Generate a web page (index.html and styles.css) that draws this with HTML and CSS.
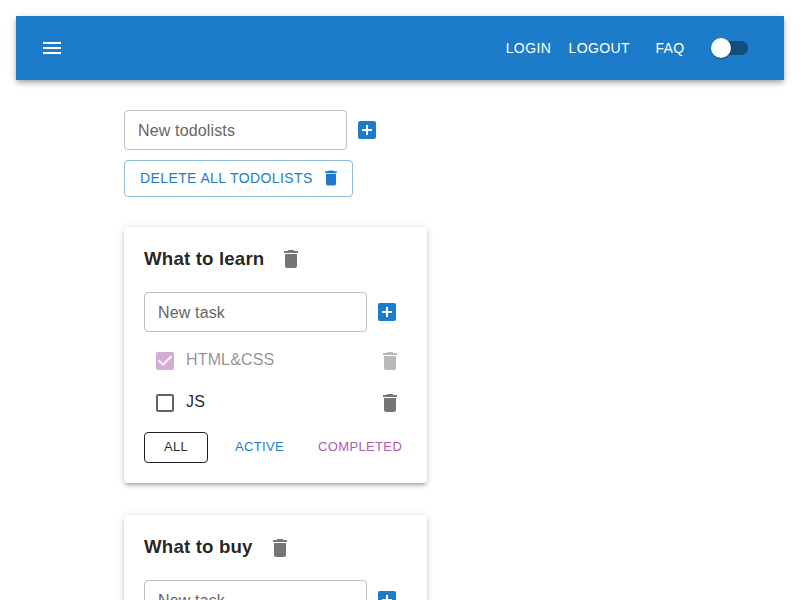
FILE: index.html
```
<!DOCTYPE html>
<html lang="en">
<head>
<meta charset="utf-8">
<title>Todolists</title>
<link rel="stylesheet" href="styles.css">
</head>
<body>
<svg class="sprite" aria-hidden="true">
  <symbol id="menu" viewBox="0 0 24 24"><path d="M3 18h18v-2H3v2zm0-5h18v-2H3v2zm0-7v2h18V6H3z"/></symbol>
  <symbol id="add" viewBox="0 0 24 24"><path d="M19 3H5c-1.11 0-2 .9-2 2v14c0 1.1.89 2 2 2h14c1.1 0 2-.9 2-2V5c0-1.1-.9-2-2-2zm-2 10h-4v4h-2v-4H7v-2h4V7h2v4h4v2z"/></symbol>
  <symbol id="delete" viewBox="0 0 24 24"><path d="M6 19c0 1.1.9 2 2 2h8c1.1 0 2-.9 2-2V7H6v12zM19 4h-3.5l-1-1h-5l-1 1H5v2h14V4z"/></symbol>
  <symbol id="checked" viewBox="0 0 24 24"><path d="M19 3H5c-1.11 0-2 .9-2 2v14c0 1.1.89 2 2 2h14c1.11 0 2-.9 2-2V5c0-1.1-.89-2-2-2zm-9 14l-5-5 1.41-1.41L10 14.17l7.59-7.59L19 8l-9 9z"/></symbol>
  <symbol id="unchecked" viewBox="0 0 24 24"><path d="M19 5v14H5V5h14m0-2H5c-1.1 0-2 .9-2 2v14c0 1.1.9 2 2 2h14c1.1 0 2-.9 2-2V5c0-1.1-.9-2-2-2z"/></symbol>
</svg>
<header class="bar">
  <button class="icon-btn menu-btn" aria-label="menu"><svg class="icon"><use href="#menu"/></svg></button>
  <nav class="nav">
    <button class="btn">Login</button>
    <button class="btn">Logout</button>
    <button class="btn">FAQ</button>
    <span class="switch"><span class="track"></span><span class="thumb"></span></span>
  </nav>
</header>
<main class="content">
  <div class="add-form">
    <input class="field" placeholder="New todolists">
    <button class="icon-btn primary" aria-label="add"><svg class="icon"><use href="#add"/></svg></button>
  </div>
  <button class="btn delete-all">Delete all todolists<svg class="icon small"><use href="#delete"/></svg></button>
  <section class="card">
    <h3 class="title"><span>What to learn</span><button class="icon-btn" aria-label="delete"><svg class="icon"><use href="#delete"/></svg></button></h3>
    <div class="add-form">
      <input class="field" placeholder="New task">
      <button class="icon-btn primary" aria-label="add"><svg class="icon"><use href="#add"/></svg></button>
    </div>
    <ul class="tasks">
      <li class="task done">
        <span class="check"><svg class="icon"><use href="#checked"/></svg></span><span class="label">HTML&amp;CSS</span>
        <button class="icon-btn" aria-label="delete"><svg class="icon"><use href="#delete"/></svg></button>
      </li>
      <li class="task">
        <span class="check"><svg class="icon"><use href="#unchecked"/></svg></span><span class="label">JS</span>
        <button class="icon-btn" aria-label="delete"><svg class="icon"><use href="#delete"/></svg></button>
      </li>
    </ul>
    <div class="filters">
      <button class="btn filter current">All</button>
      <button class="btn filter active">Active</button>
      <button class="btn filter completed">Completed</button>
    </div>
  </section>
  <section class="card">
    <h3 class="title"><span>What to buy</span><button class="icon-btn" aria-label="delete"><svg class="icon"><use href="#delete"/></svg></button></h3>
    <div class="add-form">
      <input class="field" placeholder="New task">
      <button class="icon-btn primary" aria-label="add"><svg class="icon"><use href="#add"/></svg></button>
    </div>
  </section>
</main>
</body>
</html>
```
FILE: styles.css
```
* { box-sizing: border-box; }
html, body { height: 100%; }
body {
  margin: 0;
  padding: 16px;
  overflow: hidden;
  background: #fff;
  color: rgba(0, 0, 0, .87);
  font: 16px/24px "Liberation Sans", Arial, sans-serif;
  letter-spacing: .15px;
}
button, input { font: inherit; letter-spacing: inherit; margin: 0; }
.sprite { display: none; }
.icon { display: block; flex: none; width: 24px; height: 24px; fill: currentColor; }
.icon.small { width: 20px; height: 20px; }
.icon-btn {
  display: flex;
  flex: none;
  padding: 8px;
  border: 0;
  background: none;
  color: rgba(0, 0, 0, .54);
}
.btn {
  min-width: 64px;
  padding: 6px 8px;
  border: 0;
  border-radius: 4px;
  background: none;
  color: inherit;
  font-size: 14px;
  line-height: 24.5px;
  letter-spacing: .4px;
  text-transform: uppercase;
  white-space: nowrap;
}
.primary { color: #1d7cc9; }

.bar {
  display: flex;
  align-items: center;
  justify-content: space-between;
  height: 64px;
  padding: 0 24px 0 16px;
  background: #1d7cc9;
  color: #fff;
  box-shadow: 0 2px 4px -1px rgba(0, 0, 0, .2), 0 4px 5px rgba(0, 0, 0, .14), 0 1px 10px rgba(0, 0, 0, .12);
}
.menu-btn { color: #fff; }
.nav { display: flex; align-items: center; }
.switch { position: relative; width: 58px; height: 38px; padding: 12px; }
.track { display: block; height: 14px; border-radius: 7px; background: #000; opacity: .38; }
.thumb {
  position: absolute;
  left: 9px;
  top: 9px;
  width: 20px;
  height: 20px;
  border-radius: 50%;
  background: #fff;
  box-shadow: 0 2px 1px -1px rgba(0, 0, 0, .2), 0 1px 1px rgba(0, 0, 0, .14), 0 1px 3px rgba(0, 0, 0, .12);
}

.content { width: 303px; margin: 30px 0 0 108px; }
.add-form { display: flex; }
.field {
  width: 223px;
  height: 40px;
  padding: 2px 13px 0;
  border: 1px solid rgba(0, 0, 0, .25);
  border-radius: 4px;
  background: none;
  color: inherit;
}
.field::placeholder { color: #666; opacity: 1; }
.delete-all {
  display: flex;
  align-items: center;
  gap: 8px;
  margin: 10px 0 30px;
  padding: 5px 11px 5px 15px;
  border: 1px solid #8ebde4;
  color: #1d7cc9;
}
.card {
  width: 303px;
  margin-bottom: 32px;
  padding: 12px 20px 20px;
  border-radius: 4px;
  background: #fff;
  box-shadow: 0 3px 3px -2px rgba(0, 0, 0, .2), 0 3px 4px rgba(0, 0, 0, .14), 0 1px 8px rgba(0, 0, 0, .12);
}
.title {
  display: flex;
  align-items: center;
  gap: 7px;
  height: 40px;
  margin: 0 0 13px;
  font-size: 18.72px;
}
.card + .card .title .icon-btn { margin-top: 2px; }
.tasks { margin: 8px 0; padding: 0; list-style: none; }
.task { display: flex; align-items: center; height: 42px; }
.done { opacity: .5; }
.check { padding: 9px; color: rgba(0, 0, 0, .6); }
.done .check { color: #ab5bb0; }
.label { flex: 1; margin-top: -2px; }
.task .icon-btn { margin-right: -3px; }
.filters { display: flex; gap: 17px; }
.filter { height: 31px; padding: 4px 10px 5px; font-size: 13px; line-height: 22px; letter-spacing: .35px; }
.current { padding: 3px 9px 4px; border: 1px solid #222; }
.active { color: #1d7cc9; }
.completed { color: #ab5bb0; }
```
